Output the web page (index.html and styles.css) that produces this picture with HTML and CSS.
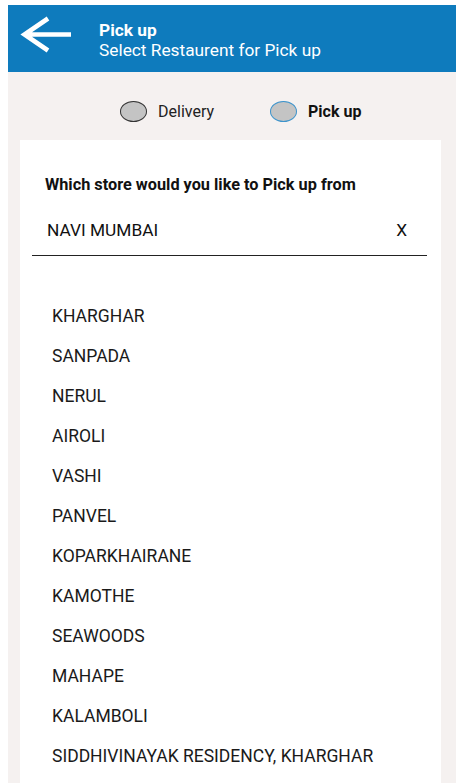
FILE: index.html
```html
<!DOCTYPE html>
<html>
<head>
<meta charset="utf-8">
<link rel="stylesheet" href="styles.css">
</head>
<body>
<div class="app">
  <header class="topbar">
    <svg class="back" width="54" height="46" viewBox="0 0 54 46">
      <path d="M51 18.5 H5 M28 2.5 L4.5 18.5 L28 34.5" fill="none" stroke="#fff" stroke-width="4.6" stroke-linecap="butt" stroke-linejoin="miter"/>
    </svg>
    <div class="titles">
      <div class="title">Pick up</div>
      <div class="subtitle">Select Restaurent for Pick up</div>
    </div>
  </header>
  <main class="content">
    <div class="mode">
      <label class="opt"><span class="radio"></span><span class="opt-label">Delivery</span></label>
      <label class="opt"><span class="radio active"></span><span class="opt-label bold">Pick up</span></label>
    </div>
    <section class="card">
      <div class="question">Which store would you like to Pick up from</div>
      <div class="search">
        <span class="search-value">NAVI MUMBAI</span>
        <span class="clear">X</span>
      </div>
      <ul class="stores">
        <li>KHARGHAR</li>
        <li>SANPADA</li>
        <li>NERUL</li>
        <li>AIROLI</li>
        <li>VASHI</li>
        <li>PANVEL</li>
        <li>KOPARKHAIRANE</li>
        <li>KAMOTHE</li>
        <li>SEAWOODS</li>
        <li>MAHAPE</li>
        <li>KALAMBOLI</li>
        <li>SIDDHIVINAYAK RESIDENCY, KHARGHAR</li>
      </ul>
    </section>
  </main>
</div>
</body>
</html>
```
FILE: styles.css
```css
html, body {
  margin: 0;
  padding: 0;
  background: #ffffff;
  font-family: Roboto, "Liberation Sans", sans-serif;
}
.app {
  margin: 5px 10px 0 8px;
  height: 778px;
  display: flex;
  flex-direction: column;
  overflow: hidden;
}
.topbar {
  height: 67px;
  background: #0e7bbd;
  display: flex;
  align-items: center;
  flex-shrink: 0;
  color: #fff;
}
.back {
  margin-left: 12px;
  flex-shrink: 0;
}
.titles {
  margin-left: 25px;
  margin-top: 2px;
}
.title {
  font-size: 17.3px;
  font-weight: bold;
  line-height: 20px;
}
.subtitle {
  font-size: 17.3px;
  line-height: 20px;
}
.content {
  flex: 1;
  background: #f5f1f0;
  display: flex;
  flex-direction: column;
  padding: 0 15px 0 12px;
}
.mode {
  height: 68px;
  box-sizing: border-box;
  padding: 11px 0 0 100px;
  display: flex;
  align-items: center;
  gap: 56px;
  flex-shrink: 0;
}
.opt {
  display: flex;
  align-items: center;
  gap: 11px;
}
.radio {
  width: 25px;
  height: 19px;
  border-radius: 50%;
  background: #c4c4c4;
  border: 1.5px solid #333;
}
.radio.active {
  border-color: #3c93cb;
}
.opt-label {
  font-size: 16px;
  color: #222;
}
.opt-label.bold {
  font-weight: bold;
  color: #111;
}
.card {
  flex: 1;
  background: #fff;
  padding: 35px 14px 0 12px;
}
.question {
  font-size: 16.3px;
  font-weight: bold;
  color: #111;
  padding-left: 13px;
  line-height: 20px;
}
.search {
  margin-top: 20px;
  height: 41px;
  box-sizing: border-box;
  display: flex;
  justify-content: space-between;
  align-items: flex-start;
  padding: 5px 20px 0 15px;
  font-size: 17.3px;
  line-height: 20px;
  color: #111;
  border-bottom: 1.5px solid #222;
}
.stores {
  list-style: none;
  margin: 40px 0 0 0;
  padding: 0 0 0 20px;
}
.stores li {
  font-size: 17.5px;
  line-height: 40px;
  color: #1a1a1a;
}
```
